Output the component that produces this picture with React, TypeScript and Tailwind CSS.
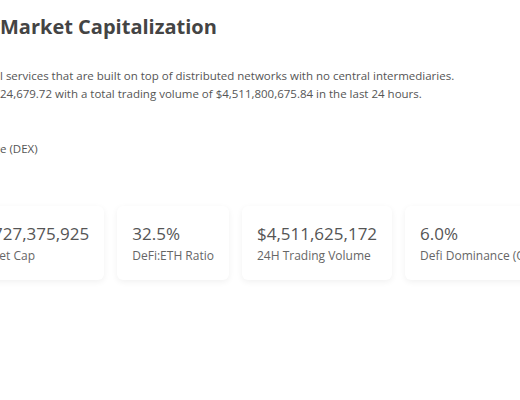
const cards = [
  { pre: "$1,", value: "727,375,925", preLabel: "DeFi Mar", label: "ket Cap" },
  { value: "32.5%", label: "DeFi:ETH Ratio" },
  { value: "$4,511,625,172", label: "24H Trading Volume" },
  { value: "6.0%", label: "Defi Dominance (Overall)" },
]

// text that runs off the left edge: the prefix hangs to the left of the line start
function Clipped({ pre, text }: { pre?: string; text: string }) {
  return (
    <div className="flex whitespace-nowrap">
      {pre && <span className="w-0 flex justify-end">{pre}</span>}
      <span>{text}</span>
    </div>
  )
}

export default function App() {
  return (
    <div
      className="w-full h-screen overflow-hidden bg-white text-[#555]"
      style={{ fontFamily: '"Open Sans", "Noto Sans", sans-serif' }}
    >
      <div className="pt-[13px]">
        <h1 className="text-[20px] leading-[28px] font-bold text-[#444]">
          <Clipped pre="Top Decentralized Finance (DeFi) Coins by " text="Market Capitalization" />
        </h1>

        <div className="mt-[26px] text-[11.5px] leading-[18px] text-[#555]">
          <Clipped pre="DeFi is a set of financia" text="l services that are built on top of distributed networks with no central intermediaries." />
          <Clipped pre="DeFi market capitalization is $88,1" text="24,679.72 with a total trading volume of $4,511,800,675.84 in the last 24 hours." />
        </div>

        <div className="mt-[37px] text-[11.5px] leading-[18px] text-[#555]">
          <Clipped pre="Top DeFi Coin: Decentralized Exchang" text="e (DEX)" />
        </div>

        <div className="mt-[48px] flex gap-[13px] whitespace-nowrap">
          {cards.map((c, i) => (
            <div
              key={i}
              className={
                "shrink-0 rounded-md bg-white px-[15px] pt-[16px] pb-[15px] shadow-[0_2px_6px_rgba(0,0,0,0.06)] " +
                (i === 0 ? "-ml-[22px]" : "")
              }
            >
              <div className="text-[17px] leading-[24px] text-[#555]">
                <Clipped pre={c.pre} text={c.value} />
              </div>
              <div className="mt-[1px] text-[12px] leading-[18px] text-[#666]">
                <Clipped pre={c.preLabel} text={c.label} />
              </div>
            </div>
          ))}
        </div>
      </div>
    </div>
  )
}
